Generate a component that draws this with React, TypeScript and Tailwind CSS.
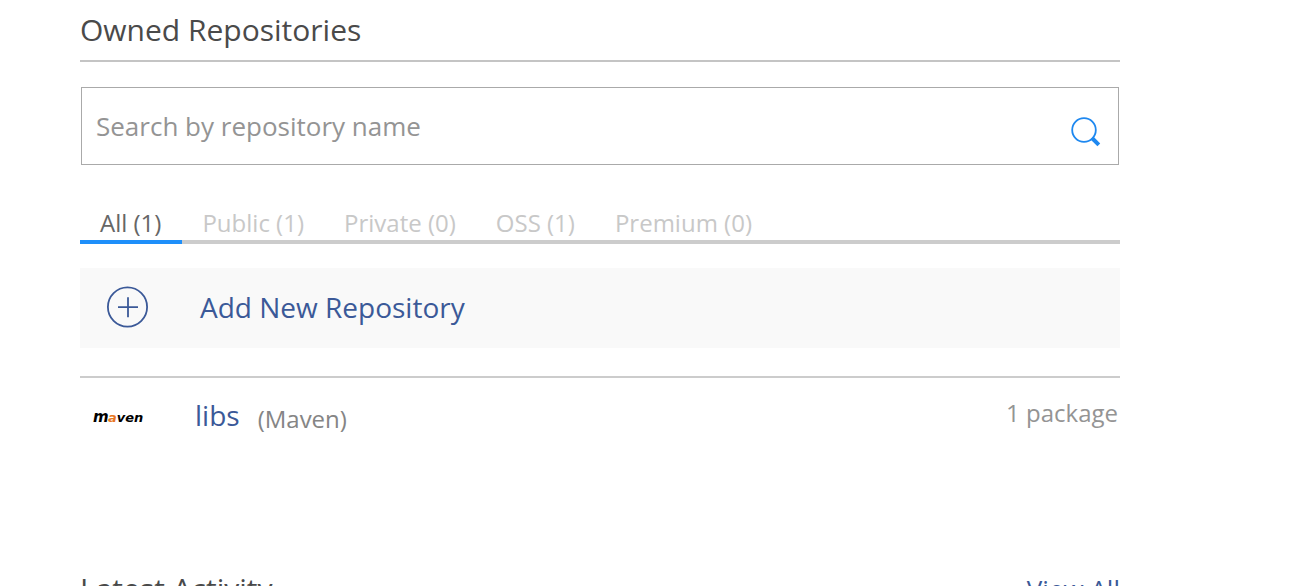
import React from "react";

const tabs = [
  { name: "All", count: 1 },
  { name: "Public", count: 1 },
  { name: "Private", count: 0 },
  { name: "OSS", count: 1 },
  { name: "Premium", count: 0 },
];

export default function App() {
  return (
    <div className="h-screen overflow-hidden bg-white font-['Open_Sans',sans-serif] text-[#4a4a4a]">
      <main className="mr-[170px] ml-20">
        <h1 className="border-b-2 border-[#c4c4c4] pt-2 pb-2 text-[30px] leading-[44px]">Owned Repositories</h1>
        <form role="search" className="mt-[25px] mx-px flex h-[78px] items-center border border-[#aaaaaa] pr-4 pl-3.5" onSubmit={(e) => e.preventDefault()}>
          <input
            type="search"
            aria-label="Search by repository name"
            placeholder="Search by repository name"
            className="min-w-0 flex-1 text-[26px] leading-9 outline-none placeholder:text-[#949494]"
          />
          <button type="submit" aria-label="Search" className="mt-3">
            <svg width="32" height="32" viewBox="0 0 32 32" fill="none" stroke="#1e88f0">
              <circle cx="14" cy="14" r="11.8" strokeWidth="1.8" />
              <path d="M22 22l6.8 6.8" strokeWidth="4" />
            </svg>
          </button>
        </form>
        <div role="tablist" className="mt-10 flex border-b-4 border-[#cccccc] text-2xl leading-[35px] text-[#c8c8c8]">
          {tabs.map((tab, i) => (
            <button
              key={tab.name}
              role="tab"
              aria-selected={i === 0}
              className={i === 0 ? "-mb-1 border-b-4 border-[#1e8ffa] pr-[21px] pl-5 text-[#666666]" : "-mb-1 border-b-4 border-transparent px-5"}
            >
              {tab.name} ({tab.count})
            </button>
          ))}
        </div>
        <a href="#new" className="mt-6 flex h-20 items-center bg-[#f9f9f9] pb-0.5 pl-[26px] text-[28px] text-[#3b5998]">
          <svg width="43" height="43" viewBox="0 0 43 43" fill="none" stroke="currentColor" strokeWidth="1.8">
            <circle cx="21.5" cy="21" r="19.6" />
            <path d="M12 21.2h20M22 11.2v20" />
          </svg>
          <span className="ml-[51px]">Add New Repository</span>
        </a>
        <section className="mt-7 flex items-center border-t-2 border-[#cccccc] pt-[15px]">
          <svg role="img" aria-label="Maven" width="76" height="44" viewBox="0 0 76 44" fontFamily="DejaVu Sans" fontStyle="italic" fontWeight="700">
            <text x="13" y="29" fontSize="15">m</text>
            <text x="28" y="29" fontSize="13"><tspan fill="#e87722">a</tspan>ven</text>
          </svg>
          <a href="#libs" className="ml-[39px] text-[28px] leading-11 text-[#3b5998]">libs</a>
          <span className="ml-[18px] pt-2 text-2xl text-[#858585]">(Maven)</span>
          <span className="mb-1 ml-auto pr-0.5 text-2xl text-[#949494]">1 package</span>
        </section>
        <section className="mt-[130px] flex justify-between">
          <h2 className="text-[30px] leading-[44px]">Latest Activity</h2>
          <a href="#activity" className="text-[26px] leading-[44px] text-[#3b5998]">View All</a>
        </section>
      </main>
    </div>
  );
}
